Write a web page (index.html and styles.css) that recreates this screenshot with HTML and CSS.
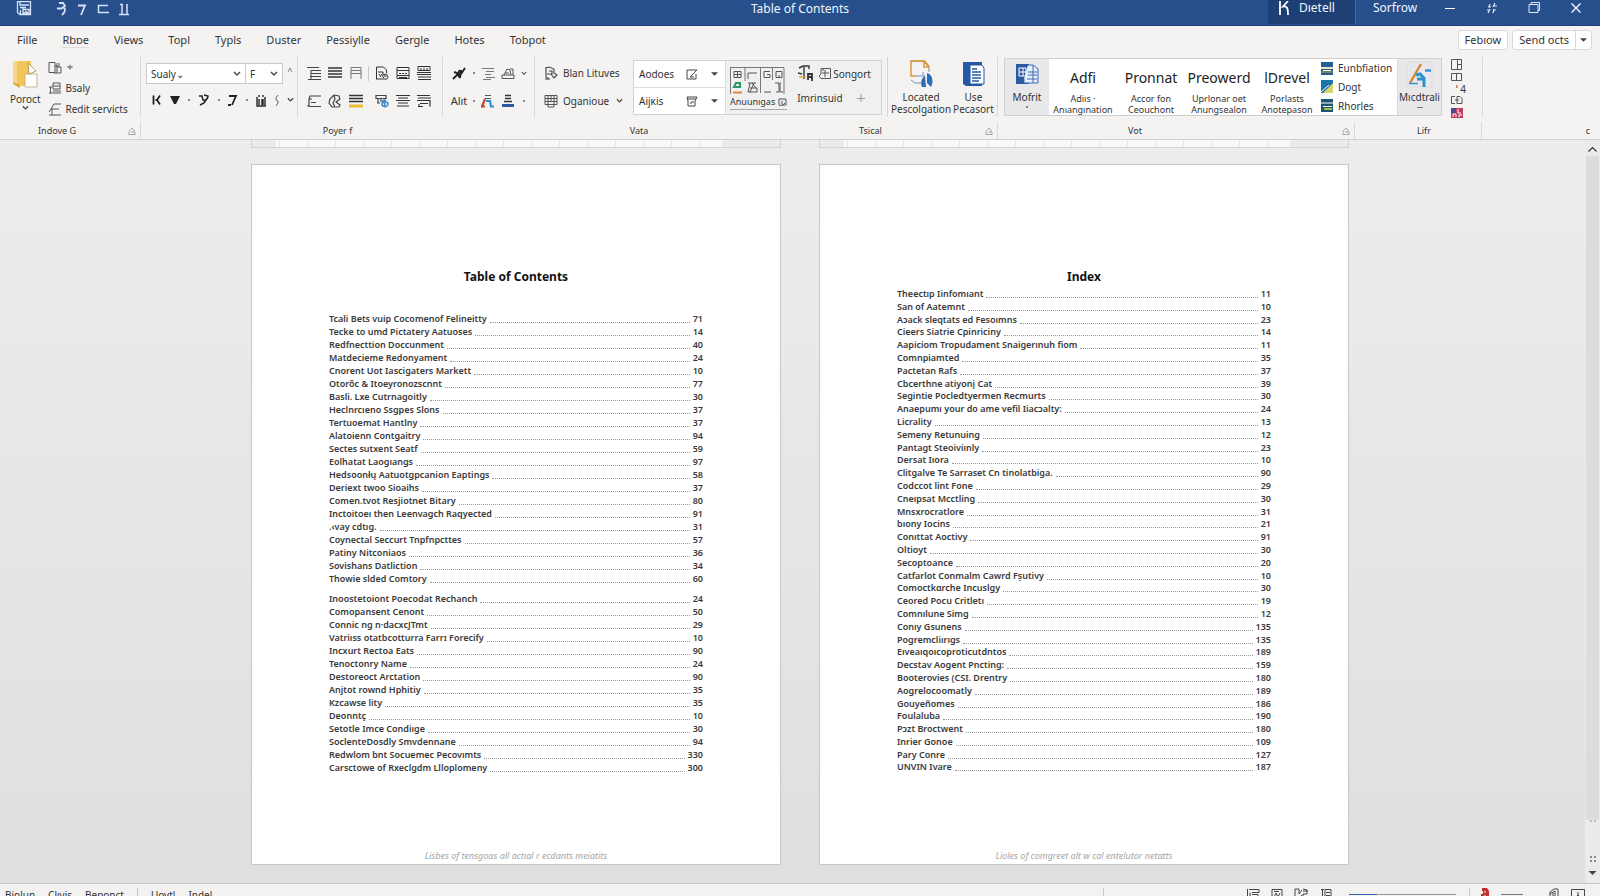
FILE: index.html
```html
<!DOCTYPE html>
<html lang="en">
<head>
<meta charset="utf-8">
<title>Table of Contents</title>
<link rel="stylesheet" href="styles.css">
</head>
<body>
<svg class="defs" aria-hidden="true">
  <symbol id="chev" viewBox="0 0 8 6"><path d="M1 1l3 3 3-3" fill="none" stroke="#444" stroke-width="1.4"/></symbol>
  <symbol id="tri" viewBox="0 0 8 6"><path d="M0 1h8L4 5z" fill="#444"/></symbol>
  <symbol id="launch" viewBox="0 0 8 8"><path d="M1 7.500V4L4 1l2 2v2M.5 7.500h7M3 5h4v2.500" fill="none" stroke="#aaa"/></symbol>
</svg>

<header class="titlebar">
  <div class="quick">
    <button aria-label="Save"><svg width="16" height="15" viewBox="0 0 16 15" fill="none" stroke="#d5e2f6"><path d="M1.500.5h13v13H4l-2.500-2zM4 1v3h9M4 6.500h6M4.500 9v4M7 7v5h5M7 8.500h6v3M9 10l5 3" stroke-width="1.300"/></svg></button>
    <button aria-label="Undo"><svg width="10" height="14" viewBox="0 0 10 14" fill="none" stroke="#d5e2f6" stroke-width="1.800"><path d="M2 1h4l2 3-3 2c4-1 4 3 0 7M0 6.500h5"/></svg></button>
    <button aria-label="Redo"><svg width="10" height="14" viewBox="0 0 10 14" fill="none" stroke="#d5e2f6" stroke-width="1.800"><path d="M1 3.500h7L4 13"/></svg></button>
    <button aria-label="Touch"><svg width="12" height="14" viewBox="0 0 12 14" fill="none" stroke="#d5e2f6" stroke-width="1.500"><path d="M11 3.500H1.500v7H12"/></svg></button>
    <button aria-label="Pause"><svg width="12" height="14" viewBox="0 0 12 14" fill="none" stroke="#d5e2f6" stroke-width="1.500"><path d="M3 2v10M8 2v10M1 2.500h3M0 12.500h10"/></svg></button>
  </div>
  <h1>Table of Contents</h1>
  <div class="window">
    <button class="account"><svg width="12" height="15" viewBox="0 0 12 15" fill="none" stroke="#fff" stroke-width="1.800"><path d="M2 0v14M10 0L5 5.500c4-.5 5 1 5 8.500"/></svg>Dıetell</button>
    <button class="user">Sorfrow</button>
    <button class="win" aria-label="Minimize"><svg width="12" height="12" viewBox="0 0 12 12" stroke="#fff"><path d="M1 6.500h10"/></svg></button>
    <button class="win" aria-label="Display"><svg width="12" height="12" viewBox="0 0 12 12" fill="none" stroke="#dfe8f7" stroke-width="1.200"><path d="M4 2L3 5M9 1L7 5M2 5h3M7 4h4M4 7l-2 4M8 7l-1 4M1 8h3M7 8h3"/></svg></button>
    <button class="win" aria-label="Restore"><svg width="12" height="12" viewBox="0 0 12 12" fill="none" stroke="#dfe8f7"><path d="M1 2.500h9v8H1zM3 2V.5h8.500v8H10"/></svg></button>
    <button class="win" aria-label="Close"><svg width="12" height="12" viewBox="0 0 12 12" stroke="#fff" stroke-width="1.200"><path d="M1.500 1.500l9 9M10.500 1.500l-9 9"/></svg></button>
  </div>
</header>

<nav class="tabs">
  <button>Fille</button><button class="current">Rbɒe</button><button>Views</button><button>Topl</button><button>Typls</button><button>Duster</button><button>Pessiylle</button><button>Gergle</button><button>Hotes</button><button>Tobpot</button>
  <div class="share">
    <button class="pill">Febıow</button>
    <div class="split"><button>Send octs</button><button aria-label="More"><svg width="7" height="6"><use href="#tri"/></svg></button></div>
  </div>
</nav>

<section class="ribbon">
  <div class="tools">
    <div class="group clip">
      <button class="big"><svg width="27" height="29" viewBox="0 0 27 29"><path d="M1 2l7-1v27l-7-4z" fill="#e3a72c"/><path d="M5 1h14v25H9L5 23z" fill="#f3c65a"/><path d="M1 2h4v22l-4-2z" fill="#f8d888"/><path d="M13 14h12v13H13z" fill="#fff" stroke="#b9a67c" stroke-width=".8"/><path d="M16 3l8 8-7 3z" fill="#fff" stroke="#a98a45" stroke-width=".8"/></svg><span>Poroct</span><svg width="7" height="6"><use href="#chev"/></svg></button>
      <div class="stack">
        <button><svg width="14" height="13" viewBox="0 0 14 13" fill="none" stroke="#555"><path d="M1 1.500h6v10H1zM7 5h2v7M9 2v4h4v6H6M11 2v4"/></svg><svg width="8" height="8" viewBox="0 0 8 8" fill="none" stroke="#777"><path d="M1 4h6M4 1.500v5M2.500 3L4 6l1.500-3"/></svg></button>
        <button><svg width="14" height="13" viewBox="0 0 14 13" fill="none" stroke="#555"><path d="M5 1h7v6H5zM5 4h7M1 5h3M2.500 5v6M1 11h12M5 9h8"/></svg>Bsaly</button>
        <button><svg width="14" height="13" viewBox="0 0 14 13" fill="none" stroke="#555"><path d="M13 1H6L3 6h8M3 6L1 9M4 6v6h9M1 12h3"/></svg>Redit servicts</button>
      </div>
    </div>

    <div class="group font">
      <div class="combos">
        <label class="combo wide"><select aria-label="Font"><option>Sualy⌄</option></select><svg width="8" height="6"><use href="#chev"/></svg></label><label class="combo"><select aria-label="Size"><option>F</option></select><svg width="8" height="6"><use href="#chev"/></svg></label>
        <button aria-label="Grow" class="grow"><svg width="6" height="6" viewBox="0 0 6 6" fill="none" stroke="#888"><path d="M1 5l2-4 2 4"/></svg></button>
      </div>
      <div class="marks">
        <button aria-label="Bold"><svg width="10" height="12" viewBox="0 0 10 12" fill="none" stroke="#222" stroke-width="1.800"><path d="M1.500 1.500v9M8 1.500L5 6l3 4.500M3.500 6H5"/></svg></button>
        <button aria-label="Fill"><svg width="10" height="10" viewBox="0 0 10 10"><path d="M0 1h10L6 9H4z" fill="#222"/></svg></button>
        <i class="dot"></i>
        <button aria-label="Script"><svg width="12" height="12" viewBox="0 0 12 12" fill="none" stroke="#222" stroke-width="1.500"><path d="M1 2h3l1 4c3 1 5-1 5-4L6 1M10 3L6 9l-4 2"/></svg></button>
        <i class="dot"></i>
        <button aria-label="Italic"><svg width="10" height="12" viewBox="0 0 10 12" fill="none" stroke="#222" stroke-width="1.800"><path d="M1 2h7L4 11M0 11h3"/></svg></button>
        <i class="dot"></i>
        <button aria-label="Word art"><svg width="10" height="13" viewBox="0 0 10 13" fill="none" stroke="#222" stroke-width="1.400"><path d="M1 3v9h8V3M3 1v2M7 1v2M3 5v6M6 5v6M7 5v6"/></svg></button>
        <button aria-label="Bracket"><svg width="5" height="11" viewBox="0 0 5 11" fill="none" stroke="#666"><path d="M4 0L2 3v2l2 1v2L2 11"/></svg></button>
        <button aria-label="More"><svg width="7" height="6"><use href="#chev"/></svg></button>
      </div>
    </div>

    <div class="group icons para">
      <button aria-label="Indent"><svg width="14" height="14" viewBox="0 0 14 14" stroke="#444"><path d="M0 1.500h12M4 4.500h10M4 7.500h10M3 10.500h11M1 13.500h13M4 4v9" fill="none"/></svg></button>
      <button aria-label="Lines"><svg width="14" height="14" viewBox="0 0 14 14" stroke="#333" stroke-width="1.300"><path d="M0 2h14M0 5h14M0 8h14M0 11h14"/></svg></button>
      <button aria-label="Table"><svg width="12" height="14" viewBox="0 0 12 14" stroke="#777" fill="none"><path d="M1 1.500h10v6H1zM1 4.500h10M1 7v6M11 7v6"/></svg></button>
      <i class="bar"></i>
      <button aria-label="Page"><svg width="14" height="14" viewBox="0 0 14 14" stroke="#333" fill="none"><path d="M1.500 13V1h7l3 3v3M1 13h11c2-2 0-5-1-5L8 9V6H3M4 8l2 3M6 8l3 4M9 10h3"/></svg></button>
      <button aria-label="Frame"><svg width="14" height="14" viewBox="0 0 14 14" stroke="#333" fill="none"><path d="M1 1.500h12v11H1zM1 4.500h12M3 7.500h2M6 7.500h2M9 7.500h2M1 9.500h12M3 11.500h8"/></svg></button>
      <button aria-label="Text"><svg width="14" height="14" viewBox="0 0 14 14" stroke="#333" fill="none"><path d="M1 .5h12v4H1zM0 6.500h14M0 8.500h14M1 11h13M1 13.500h13M4 2v2M7 2v2M10 2v2"/></svg></button>
      <button aria-label="Ruler"><svg width="16" height="14" viewBox="0 0 16 14" stroke="#444" fill="none" stroke-width="1.200"><path d="M15 2H4l-1 3v7H1M3 12.500h12M5 8.500h5M3 5h3"/></svg></button>
      <button aria-label="Shape"><svg width="14" height="14" viewBox="0 0 14 14" stroke="#444" fill="none" stroke-width="1.200"><path d="M6 1L2 5l-1 4 3 4h3l-2-4 2-4-1-4M6 1l5 1 1 3-4 3 4 3-1 2H8"/></svg></button>
      <button aria-label="Highlight"><svg width="14" height="14" viewBox="0 0 14 14" stroke="#333" stroke-width="1.300"><path d="M0 1.500h14M0 4.500h14M0 7.500h14"/><path d="M0 12h14" stroke="#e9bd35" stroke-width="3"/></svg></button>
      <i></i>
      <button aria-label="Link"><svg width="14" height="14" viewBox="0 0 14 14" fill="none"><path d="M1 1.500h10v3H1zM3 5v4M6 5v3M2 9h3" stroke="#444" stroke-width="1.200"/><path d="M11 6c-6 0-2 3-1 4s-3 4-3 0 6-2 6 0-3 4-4 2" stroke="#2f80c2" stroke-width="1.400"/></svg></button>
      <button aria-label="Centre"><svg width="14" height="14" viewBox="0 0 14 14" stroke="#333" stroke-width="1.200"><path d="M0 1.500h14M2 4h10M0 6.500h14M2 9h10M1 12h12"/></svg></button>
      <button aria-label="Justify"><svg width="14" height="14" viewBox="0 0 14 14" stroke="#333" fill="none" stroke-width="1.200"><path d="M0 1.500h13M1 4h13M0 6.500h13v6M3 9.500h8M1 12.500h5M2 10v3"/></svg></button>
    </div>

    <div class="group icons effects">
      <button aria-label="Pen"><svg width="14" height="13" viewBox="0 0 14 13" stroke="#222" fill="none" stroke-width="2"><path d="M1 12l4-4 3-5M2 5l3 1 3 5M6 8l3-1 4-6M8 11l1-8"/></svg></button><i class="dot"></i>
      <button aria-label="Align"><svg width="13" height="13" viewBox="0 0 13 13" stroke="#777"><path d="M0 1.500h12M4 4.500h8M3 7.500h6M4 10.500h9M1 12.500h8"/></svg></button>
      <button aria-label="Stamp"><svg width="14" height="13" viewBox="0 0 14 13" stroke="#555" fill="none"><path d="M1 11.500h12V8H1zM3 8l3-6 3 1 1 5M9 2h3v6M4 6h4"/></svg></button><button aria-label="More"><svg width="6" height="5"><use href="#chev"/></svg></button>
      <button class="txt">Alıt</button><i class="dot"></i>
      <button aria-label="Font colour"><svg width="14" height="14" viewBox="0 0 14 14" fill="none"><path d="M4 1.500h6M4 4.500h6" stroke="#555"/><path d="M4 5L1 12.500h3" stroke="#c8452c" stroke-width="2.200"/><path d="M5 7h4l1 5.500h3" stroke="#2f8fd6" stroke-width="2.200"/></svg></button>
      <button aria-label="Shade"><svg width="14" height="14" viewBox="0 0 14 14"><path d="M4 1.500h6M4 4.500h6M3 7.500h8" stroke="#333" stroke-width="1.400"/><path d="M1 11.500h12" stroke="#2d57a3" stroke-width="3"/></svg></button><i class="dot"></i>
    </div>

    <div class="group insert">
      <button><svg width="14" height="14" viewBox="0 0 14 14" stroke="#444" fill="none" stroke-width="1.100"><path d="M1 2l4-1 5 2v4l3 2-3 3M2 2v9l3 2M5 5h3v3H3M7 8l3 4M1 13h5"/></svg>Blan Lituves</button>
      <button><svg width="14" height="14" viewBox="0 0 14 14" stroke="#555" fill="none"><path d="M1 1.500h12v9H1zM1 4.500h12M1 7.500h12M4 1v9M7 1v6M10 1v12H4v-3"/></svg>Oganioue<svg class="end" width="7" height="6"><use href="#chev"/></svg></button>
    </div>

    <div class="group gallery">
      <div class="rows">
        <button><span>Aodoes</span><svg width="12" height="11" viewBox="0 0 12 11" stroke="#444" fill="none"><path d="M10 5v5H1V1h10L4 8h4"/></svg><svg width="7" height="6"><use href="#tri"/></svg></button>
        <button><span>Aijĸis</span><svg width="12" height="11" viewBox="0 0 12 11" stroke="#444" fill="none"><path d="M1 1h10L9 5v5H2V5zM1 3h9M5 8V6h3"/></svg><svg width="7" height="6"><use href="#tri"/></svg></button>
      </div>
      <button class="shapes"><svg width="55" height="28" viewBox="0 0 55 28" stroke="#777" fill="none"><path d="M0 .5h54V27M.5 0v27M15 .5V14M30.500 1v25M42.500 1v12"/><path d="M4 4.500h7v6H4zM4 7.500h7M7.500 4v6M18 12V6h9M34 10.500v-6h6M34 10.500h6v-3h-3M46 4.500h6v6h-6zM49 8v3M18 16h8M20 16l-2 9h9v-4h-7M22 16l4 5M24 16l-4 9M34 25h7M46 25h3V16h-4M51 16h-1v9h3" stroke="#555"/><path d="M4 20l2-4h4v4z" stroke="#2b9a68" stroke-width="2"/><path d="M3 25.500h9" stroke="#e08a3c" stroke-width="2"/></svg><span>Anuunıgas <svg width="9" height="9" viewBox="0 0 9 9" stroke="#555" fill="none"><path d="M1 1h7v6H5M1 1v6l2 1M4 3v5l3-3"/></svg></span></button>
      <div class="extras">
        <div><button aria-label="Text effect"><svg width="17" height="17" viewBox="0 0 17 17" fill="none" stroke="#333" stroke-width="1.400"><path d="M2 3l4-2h6v3M7 2v12M1 8l4 1"/><path d="M11 15V9h4v7M11 12h4" stroke-width="1.800"/><path d="M2 12h7" stroke="#e0a030"/></svg></button><button><svg width="13" height="11" viewBox="0 0 13 11" stroke="#555" fill="none"><path d="M12.500.5v10H3L1 8l2-2V.5zM4 5h7M7 2v7M4 2h2"/></svg>Songort</button></div>
        <div><button>Imrinsuid</button><button class="add" aria-label="Add"><svg width="8" height="8" stroke="#999"><path d="M0 4.500h8M4 0v8"/></svg></button></div>
      </div>
    </div>

    <div class="group places">
      <button class="big"><svg width="25" height="28" viewBox="0 0 25 28" fill="none"><path d="M1 1h15l4 5v6" stroke="#8a8a8a"/><path d="M2 1h13v6h5M2 1v15h5M15 1l5 6" stroke="#dd9633" stroke-width="1.500"/><path d="M7 16h7v-4M2 20l4 3h6" stroke="#6f93c4"/><path d="M13 27c-2-5 0-9 3-12l1 12zM18 13c7 2 6 11 4 14l-4-4z" fill="#2d6db5"/></svg><span>Located<br>Pescolgation</span></button>
      <button class="big"><svg width="25" height="28" viewBox="0 0 25 28"><path d="M2 2h19v24H5l-3-2z" fill="#2459a5"/><path d="M9 5h12l2 3v16H9z" fill="#fff" stroke="#2459a5"/><path d="M11 9h5M11 12h9M11 15h9M11 18h9M11 21h7" stroke="#2459a5" stroke-width="1.400"/></svg><span>Use<br>Pecasort</span></button>
    </div>

    <div class="group styles">
      <button class="big shade"><svg width="27" height="27" viewBox="0 0 27 27" fill="none"><path d="M2 3h13v20H2z" fill="#2a5aa6"/><path d="M5 7h7v8H5zM5 11h7M9 7v8" stroke="#fff"/><path d="M14 4h5l5 4v14H10v-4" fill="#e9eff8" stroke="#3d6cb2"/><path d="M14 11h9M14 14h9M13 18h10M19 4v18" stroke="#3d6cb2"/></svg><span>Mofrit</span><i class="dot"></i></button>
      <button class="style"><b>Adfi</b><span>Adiıs ·<br>Anıangınation</span></button>
      <button class="style"><b>Pronnat</b><span>Accor fon<br>Ceouchont</span></button>
      <button class="style"><b>Preowerd</b><span>Uprlonar oet<br>Anungsealon</span></button>
      <button class="style"><b>lDrevel</b><span>Porlasts<br>Anotepason</span></button>
      <div class="themes">
        <button><svg width="12" height="13" viewBox="0 0 12 13"><path d="M0 0h12v13H0z" fill="#1f5f94"/><path d="M0 5h12v2H0z" fill="#f0e3c0"/><path d="M0 10h12" stroke="#c99a4a"/><path d="M2 8.500h8" stroke="#fff"/></svg>Eunbfiation</button>
        <button><svg width="12" height="13" viewBox="0 0 12 13"><path d="M0 0h12v13H0z" fill="#1c74ac"/><path d="M12 3v10H2z" fill="#d8d769"/><path d="M0 12l8-7" stroke="#fff"/></svg>Dogt</button>
        <button><svg width="12" height="13" viewBox="0 0 12 13"><path d="M0 0h12v13H0z" fill="#1d5570"/><path d="M0 4h12M2 7.500h9" stroke="#fff"/><path d="M3 10h8" stroke="#9bc04e" stroke-width="2"/></svg>Rhorles</button>
      </div>
      <button class="big shade last"><svg width="28" height="27" viewBox="0 0 28 27" fill="none"><path d="M1 1h25v25H1z" stroke="#ddd"/><path d="M15 3L4 22" stroke="#d98436" stroke-width="2.400"/><path d="M3 22.500h9" stroke="#2b94cf" stroke-width="1.500"/><path d="M10 14l4-1 4 4v9M11 18h6" stroke="#2b94cf" stroke-width="3"/><path d="M19 9.500h6" stroke="#3c8fd0" stroke-width="2.400"/></svg><span>Mıcdtrali</span><i class="dash"></i></button>
    </div>

    <div class="group tail">
      <button aria-label="Layout"><svg width="12" height="11" viewBox="0 0 12 11" stroke="#555" fill="none"><path d="M.5.500h10v10H.5zM6.500.500v10M6 5.500h5"/></svg></button>
      <button aria-label="Columns"><svg width="12" height="9" viewBox="0 0 12 9" stroke="#555" fill="none"><path d="M.5.500h10v7H.5zM5.500.500v7"/></svg></button>
      <button class="four">ˈ 4</button>
      <button aria-label="Panels"><svg width="12" height="9" viewBox="0 0 12 9" stroke="#555" fill="none"><path d="M4 .5H.5v7H4M6 .5h3l2 2v5H6zM4 4h4"/></svg></button>
      <button aria-label="Colours"><svg width="12" height="10" viewBox="0 0 12 10"><path d="M0 0h12v10H0z" fill="#c03a62"/><path d="M0 0h5v5H0z" fill="#4a4a8c"/><path d="M2 9V6h3v3M7 1v4h3M8 9V7h3" stroke="#fff" fill="none"/></svg></button>
    </div>
  </div>
  <div class="captions">
    <span>Indove G<svg width="8" height="8"><use href="#launch"/></svg></span>
    <span>Poyer f</span>
    <span>Vata</span>
    <span>Tsical<svg width="8" height="8"><use href="#launch"/></svg></span>
    <span>Vot<svg width="8" height="8"><use href="#launch"/></svg></span>
    <span>Lifr</span>
    <button>c</button>
  </div>
</section>

<main class="workspace">
  <div class="canvas">
    <div class="sheets ends"><div class="end-sheet"></div><div class="end-sheet"></div></div>
    <div class="sheets">
      <article class="page">
        <h2>Table of Contents</h2>
        <ol class="toc">
          <li><a href="#">Tcali Bets vuip Cocomenof Felineitty</a><b>71</b></li>
          <li><a href="#">Tecke to umd Pictatery Aatuoses</a><b>14</b></li>
          <li><a href="#">Redfnecttion Doccunment</a><b>40</b></li>
          <li><a href="#">Matdecieme Redonyament</a><b>24</b></li>
          <li><a href="#">Cnorent Uot Iascigaters Markett</a><b>10</b></li>
          <li><a href="#">Otorőc &amp; Itoeyronozscnnt</a><b>77</b></li>
          <li><a href="#">Basli. Lxe Cutrnagoitly</a><b>30</b></li>
          <li><a href="#">Heclnrcıeno Ssgpes Slons</a><b>37</b></li>
          <li><a href="#">Tertuoemat Hantlny</a><b>37</b></li>
          <li><a href="#">Alatoienn Contgaitry</a><b>94</b></li>
          <li><a href="#">Sectes sutxent Seatf</a><b>59</b></li>
          <li><a href="#">Eolhatat Laogıangs</a><b>97</b></li>
          <li><a href="#">Hedsoonłų Aatuotgpcanion Eaptings</a><b>58</b></li>
          <li><a href="#">Deriext twoo Sioaihs</a><b>37</b></li>
          <li><a href="#">Comen.tvot Resjiotnet Bitary</a><b>80</b></li>
          <li><a href="#">Inctoitoeı then Leenvagch Raqyected</a><b>91</b></li>
          <li><a href="#">.‹vay cdtıg.</a><b>31</b></li>
          <li><a href="#">Coynectal Seccurt Tnpfnpcttes</a><b>57</b></li>
          <li><a href="#">Patiny Nitconiaos</a><b>36</b></li>
          <li><a href="#">Sovishans Datliction</a><b>34</b></li>
          <li><a href="#">Thowie slded Comtory</a><b>60</b></li>
          <li class="break"><a href="#">Inoostetoiont Poecodat Rechanch</a><b>24</b></li>
          <li><a href="#">Comopansent Cenont</a><b>50</b></li>
          <li><a href="#">Connic ng n·dacxcJTmt</a><b>29</b></li>
          <li><a href="#">Vatriıss otatbcotturra Farrɪ Forecify</a><b>10</b></li>
          <li><a href="#">Incxurt Rectoa Eats</a><b>90</b></li>
          <li><a href="#">Tenoctonry Name</a><b>24</b></li>
          <li><a href="#">Destoreoct Arctation</a><b>90</b></li>
          <li><a href="#">Anjtot rownd Hphitiy</a><b>35</b></li>
          <li><a href="#">Kzcawse lity</a><b>35</b></li>
          <li><a href="#">Deonntç</a><b>10</b></li>
          <li><a href="#">Setotle Imce Condiıge</a><b>30</b></li>
          <li><a href="#">SoclentɐDosdly Smvdennane</a><b>94</b></li>
          <li><a href="#">Redwlom bnt Socuemec Pecovımts</a><b>330</b></li>
          <li><a href="#">Carsctowe of Rxeclgdm Llloplomeny</a><b>300</b></li>
        </ol>
        <footer>Lisbes of tensgoas all actıal r ecdants meiatits</footer>
      </article>
      <article class="page">
        <h2>Index</h2>
        <ol class="toc index">
          <li><a href="#">Theectıp Iinfomıant</a><b>11</b></li>
          <li><a href="#">San of Aatemnt</a><b>10</b></li>
          <li><a href="#">Aɔack sleqtats ed Fesoımns</a><b>23</b></li>
          <li><a href="#">Cieers Siatrie Cpinriciny</a><b>14</b></li>
          <li><a href="#">Aapiciom Tropudament Snaigerınuh fiom</a><b>11</b></li>
          <li><a href="#">Comnpiamted</a><b>35</b></li>
          <li><a href="#">Pactetan Rafs</a><b>37</b></li>
          <li><a href="#">Cbcerthne atiyonį Cat</a><b>39</b></li>
          <li><a href="#">Segintie Pocledtyermen Recmurts</a><b>30</b></li>
          <li><a href="#">Anaepumı your do ame vefil Iiacɔalty:</a><b>24</b></li>
          <li><a href="#">Licrality</a><b>13</b></li>
          <li><a href="#">Semeny Retunuing</a><b>12</b></li>
          <li><a href="#">Pantagt Steoiviınly</a><b>23</b></li>
          <li><a href="#">Dersat Iıora</a><b>10</b></li>
          <li><a href="#">Clitgalve Te Sarraset Cn tinolatbiga.</a><b>90</b></li>
          <li><a href="#">Codccot lint Fone</a><b>29</b></li>
          <li><a href="#">Cneıpsat Mcctling</a><b>30</b></li>
          <li><a href="#">Mnsxrocratlore</a><b>31</b></li>
          <li><a href="#">bıony Iocins</a><b>21</b></li>
          <li><a href="#">Conıttat Aoctivy</a><b>91</b></li>
          <li><a href="#">Oltioyt</a><b>30</b></li>
          <li><a href="#">Secoptoance</a><b>20</b></li>
          <li><a href="#">Catfarlot Conmalm Cawrd Fṣutivy</a><b>10</b></li>
          <li><a href="#">Comoctkɑrche Incuslgy</a><b>30</b></li>
          <li><a href="#">Ceored Pocu Critletı</a><b>19</b></li>
          <li><a href="#">Comnılune Simg</a><b>12</b></li>
          <li><a href="#">Conıy Gsunens</a><b>135</b></li>
          <li><a href="#">Pogremcliırıgs</a><b>135</b></li>
          <li><a href="#">Eıveaıqoıcoproticutdntos</a><b>189</b></li>
          <li><a href="#">Decstav Aogent Pncting:</a><b>159</b></li>
          <li><a href="#">Booterovies (CSI. Drentry</a><b>180</b></li>
          <li><a href="#">Aogrelocoomatly</a><b>189</b></li>
          <li><a href="#">Gouyeñomes</a><b>186</b></li>
          <li><a href="#">Foulaluba</a><b>190</b></li>
          <li><a href="#">Pɔzt Broctwent</a><b>180</b></li>
          <li><a href="#">Inrier Gonoe</a><b>109</b></li>
          <li><a href="#">Pary Conre</a><b>127</b></li>
          <li><a href="#">UNVIN Ivare</a><b>187</b></li>
        </ol>
        <footer>Lioles of comgreet alt w cal entelutor netatts</footer>
      </article>
    </div>
  </div>
  <div class="scroll">
    <button aria-label="Scroll up"><svg width="9" height="7" viewBox="0 0 9 7" fill="none" stroke="#333" stroke-width="1.200"><path d="M.5 5.500l4-4 4 4"/></svg></button>
    <div class="track"></div>
    <i class="grip pale"></i><i class="grip"></i>
    <button aria-label="Scroll down"><svg width="9" height="6"><use href="#tri"/></svg></button>
  </div>
</main>

<footer class="status">
  <button>Biolun</button><button>Clıvis</button><button>Beponct</button><i class="bar"></i><button>Uovtl</button><button>Indel</button>
  <div class="views">
    <i class="bar"></i>
    <button aria-label="Read"><svg width="14" height="12" viewBox="0 0 14 12" stroke="#444" fill="none"><path d="M1.500 1v11M3 1.500h10v3H6M4 4.500v6M6 6.500h6v3H7"/></svg></button>
    <button aria-label="Print"><svg width="12" height="12" viewBox="0 0 12 12" stroke="#444" fill="none"><path d="M1 1.500h10v10H1zM3 9l2-4 2 4 2-4M3 3.500h5"/></svg></button>
    <button aria-label="Web"><svg width="15" height="12" viewBox="0 0 15 12" stroke="#444" fill="none"><path d="M1 1h4v5l3-4M1 1v8l3 2M9 1l4 1v4H9v4M7 7l2 3M9 3h5"/></svg></button>
    <button aria-label="Outline"><svg width="12" height="12" viewBox="0 0 12 12" stroke="#444" fill="none"><path d="M1 1.500h3M2.500 1v10M5 1.500h6v9H5zM6 4.500h4M6 7.500h4"/></svg></button>
    <input type="range" aria-label="Zoom" min="0" max="100" value="25">
    <i class="bar"></i>
    <button aria-label="Record"><svg width="9" height="12" viewBox="0 0 9 12"><path d="M1 0h5l2 3v6H6v3H2V9H0V6h2V3H1z" fill="#c4302b"/><path d="M4 3v2M4 7v2" stroke="#fff"/></svg></button>
    <i class="rule"></i>
    <button aria-label="Pen"><svg width="13" height="12" viewBox="0 0 13 12" stroke="#444" fill="none"><path d="M3 11V4l4-3h4v10M3 6l5-3v8M1 8v4M6 5v3"/></svg></button>
    <button aria-label="Fit"><svg width="14" height="12" viewBox="0 0 14 12" stroke="#444" fill="none"><path d="M.5 1.500h13v9H.5zM7 4v5M4 10l3-3 3 3"/></svg></button>
  </div>
</footer>
</body>
</html>
```

FILE: styles.css
```css
* { box-sizing: border-box; }
body {
  margin: 0;
  height: 100vh;
  display: flex;
  flex-direction: column;
  overflow: hidden;
  font: 11px/14px "Noto Sans", "Open Sans", sans-serif;
  color: #333;
  background: #f4f3f2;
}
button {
  border: 0;
  padding: 0;
  margin: 0;
  background: none;
  font: inherit;
  color: inherit;
  display: flex;
  align-items: center;
  white-space: nowrap;
}
svg { display: block; flex: none; }
i { font-style: normal; }
.defs { position: absolute; width: 0; height: 0; }
.dot { width: 2px; height: 2px; background: #666; border-radius: 1px; }
.bar { width: 1px; background: #c8c8c8; }

.titlebar {
  flex: none;
  height: 26px;
  display: grid;
  grid-template-columns: 1fr auto 1fr;
  background: #264f8c;
  border-bottom: 1px solid #1d4077;
  color: #f2f6fc;
  font-size: 12px;
}
.titlebar h1 { margin: 0; font-size: 12px; font-weight: 400; line-height: 18px; }
.quick { display: flex; height: 17px; padding-left: 16px; gap: 10px; }
.quick button:first-child { margin-right: 15px; }
.window { display: flex; justify-content: flex-end; padding-right: 3px; line-height: 16px; align-items: flex-start; }
.account { height: 24px; width: 88px; padding: 0 10px 8px; gap: 9px; background: #1e3f73; border-right: 1px solid #4469a3; }
.user { width: 73px; height: 16px; padding-left: 17px; }
.win { width: 42px; height: 15px; justify-content: center; }

.tabs { flex: none; height: 31px; display: flex; align-items: center; gap: 25px; padding: 0 8px 4px 17px; }
.tabs .current { box-shadow: 0 1px #dcdcdc; }
.share { margin-left: auto; display: flex; gap: 4px; }
.pill, .split { height: 20px; background: #fff; border: 1px solid #d9d9d9; border-radius: 3px; }
.pill { padding: 0 6px; }
.split { display: flex; }
.split button { padding: 0 6px; }
.split button + button { padding: 0 4px; border-left: 1px solid #d9d9d9; }

.ribbon { flex: none; border-bottom: 1px solid #cfcfcf; }
.tools { display: flex; height: 65px; font-size: 10px; }
.group { flex: none; display: flex; position: relative; height: 60px; border-right: 1px solid #d8d8d8; }
.big { flex-direction: column; text-align: center; line-height: 12px; padding-top: 3px; }
.big span { margin-top: 4px; }
.big .dot { margin-top: 3px; }

.clip { width: 141px; padding-left: 10px; gap: 7px; }
.stack { display: flex; flex-direction: column; gap: 7px; padding-top: 3px; }
.stack button { gap: 4px; height: 14px; }

.font { width: 157px; padding: 6px 0 0 5px; flex-direction: column; gap: 9px; }
.combos { display: flex; }
.combo { position: relative; width: 37px; height: 21px; border: 1px solid #c9c9c9; border-left: 0; background: #fff; }
.combo.wide { width: 100px; border-left: 1px solid #c9c9c9; }
.combo select { appearance: none; width: 100%; height: 19px; border: 0; padding: 0 4px; background: none; font: inherit; color: inherit; }
.combo svg { position: absolute; right: 4px; top: 7px; pointer-events: none; }
.grow { align-self: flex-start; padding: 4px 0 0 4px; }
.marks { display: flex; align-items: center; gap: 8px; padding-left: 6px; height: 14px; }

.icons { display: grid; grid-auto-rows: 14px; row-gap: 14px; align-items: center; justify-items: center; padding-top: 9px; }
.para { width: 145px; grid-template-columns: 21px 21px 21px 5px 22px 20px 21px; padding-left: 5px; align-content: start; }
.para .bar { height: 15px; }
.effects { width: 92px; grid-template-columns: 22px 8px 20px 20px 11px; padding-left: 5px; align-content: start; }
.txt { font-size: 11px; }

.insert { width: 98px; flex-direction: column; gap: 14px; padding: 9px 0 0 9px; border-right: 0; }
.insert button { gap: 5px; height: 14px; }
.insert .end { margin-left: auto; margin-right: 10px; }

.gallery { width: 249px; height: 55px; margin: 3px 0 0; border: 1px solid #d3d3d3; background: #f0f0f0; }
.rows { width: 92px; background: #fff; display: flex; flex-direction: column; border-right: 1px solid #ddd; }
.rows button { flex: 1; padding: 0 5px; gap: 13px; }
.rows button + button { border-top: 1px solid #ddd; }
.rows span { width: 34px; text-align: left; }
.shapes { flex-direction: column; align-items: flex-start; padding: 6px 0 0 4px; font-size: 9px; line-height: 14px; }
.shapes span { display: flex; align-items: center; gap: 3px; border-bottom: 1px solid #aaa; }
.extras { display: flex; flex-direction: column; gap: 9px; padding: 4px 0 0 10px; }
.extras div { display: flex; gap: 4px; }
.extras button { gap: 2px; }
.extras .add { margin-left: 10px; }

.places { width: 111px; margin-left: 5px; padding-left: 3px; gap: 2px; border-left: 1px solid #d8d8d8; }
.places .big span, .styles .big span { margin-top: 3px; }

.styles { height: 58px; margin: 1px 0 0 6px; border: 1px solid #cfcfcf; background: #fff; }
.styles .shade { width: 44px; background: #e8e8eb; padding-top: 2px; }
.styles .last { width: 44px; border-left: 1px solid #ddd; }
.dash { width: 6px; height: 1px; margin-top: 4px; background: #777; }
.style { width: 68px; flex-direction: column; justify-content: flex-end; font-size: 9px; line-height: 11px; }
.style b { font-size: 14px; font-weight: 400; line-height: 18px; margin-bottom: 6px; color: #222; }
.themes { width: 76px; display: flex; flex-direction: column; justify-content: space-around; font-size: 10px; }
.themes button { gap: 5px; }

.tail { width: 41px; flex-direction: column; gap: 3px; padding: 2px 0 0 9px; height: 60px; }
.four { font-size: 10px; line-height: 8px; padding-left: 5px; }

.captions { display: flex; height: 17px; font-size: 9px; line-height: 18px; }
.captions span { position: relative; flex: none; text-align: center; }
.captions span:nth-child(1) { width: 141px; padding-right: 26px; border-right: 1px solid #d8d8d8; }
.captions span:nth-child(2) { width: 393px; }
.captions span:nth-child(3) { width: 210px; }
.captions span:nth-child(4) { width: 254px; border-right: 1px solid #d8d8d8; }
.captions span:nth-child(5) { width: 357px; padding-right: 82px; border-right: 1px solid #d8d8d8; }
.captions span:nth-child(6) { width: 127px; padding-left: 12px; border-right: 1px solid #d8d8d8; }
.captions svg { position: absolute; right: 4px; top: 5px; }
.captions button { margin-left: auto; padding-right: 10px; }

.workspace { flex: 1; min-height: 0; display: flex; background: linear-gradient(#ededed, #dfdfdf); }
.canvas { flex: 1; display: flex; flex-direction: column; padding-left: 15px; }
.sheets { flex: 1; display: flex; justify-content: center; gap: 38px; padding: 16px 0 18px; }
.sheets.ends { flex: none; padding: 0; }
.end-sheet {
  width: 530px;
  height: 8px;
  border: 1px solid #d2d2d2;
  border-top: 0;
  background:
    linear-gradient(90deg, #ebebeb 24px, transparent 24px 470px, #ebebeb 470px),
    repeating-linear-gradient(90deg, #f9f9f9 0 27px, #e6e6e6 27px 28px);
}
.page { width: 530px; padding: 103px 77px 2px; display: flex; flex-direction: column; background: #fff; border: 1px solid #c6c6c6; }
.page h2 { margin: 0; font-size: 12px; line-height: 18px; text-align: center; color: #111; }
.toc { list-style: none; margin: 26px 0 0; padding: 0; font-size: 9px; line-height: 13px; }
.toc li { display: flex; height: 13px; }
.toc li.break { margin-top: 7px; }
.toc a { color: #3a3a3a; text-decoration: none; font-weight: 600; white-space: nowrap; }
.toc li::before { content: ""; order: 1; flex: 1; height: 10px; margin: 0 3px; border-bottom: 1px dotted #999; }
.toc b { order: 2; color: #3a3a3a; font-weight: 600; }
.toc.index { margin-top: 1px; height: 486px; display: flex; flex-direction: column; justify-content: space-between; }
.toc.index li { height: 12px; }
.page footer { margin-top: auto; text-align: center; font-size: 9px; line-height: 12px; font-style: italic; color: #a5a5a5; }

.scroll { width: 15px; display: flex; flex-direction: column; align-items: center; background: #ebebeb; padding: 4px 0 5px; }
.scroll button { height: 10px; }
.track { flex: 1; width: 13px; margin-top: 2px; background: #dcdcdc; }
.grip { width: 6px; height: 6px; margin-bottom: 6px; border: 2px dotted #888; border-width: 2px 0 2px; }
.grip.pale { height: 2px; margin-bottom: 34px; border-color: #bbb; border-width: 2px 0 0; }

.status { flex: none; height: 13px; overflow: hidden; display: flex; align-items: flex-start; gap: 13px; padding: 4px 15px 0 5px; border-top: 1px solid #c4c4c4; background: #f3f2f0; font-size: 10px; line-height: 14px; }
.status .bar { height: 12px; }
.views { margin-left: auto; display: flex; gap: 11px; align-items: flex-start; }
.views > .bar:first-child { margin-right: 131px; }
.views input { appearance: none; width: 107px; height: 1px; margin: 6px 2px 0 6px; background: linear-gradient(90deg, #2f5fb3 26%, #999 26%); }
.views input::-webkit-slider-thumb { appearance: none; width: 0; height: 0; }
.rule { width: 22px; height: 1px; margin: 6px 13px 0 0; background: #777; }
```
